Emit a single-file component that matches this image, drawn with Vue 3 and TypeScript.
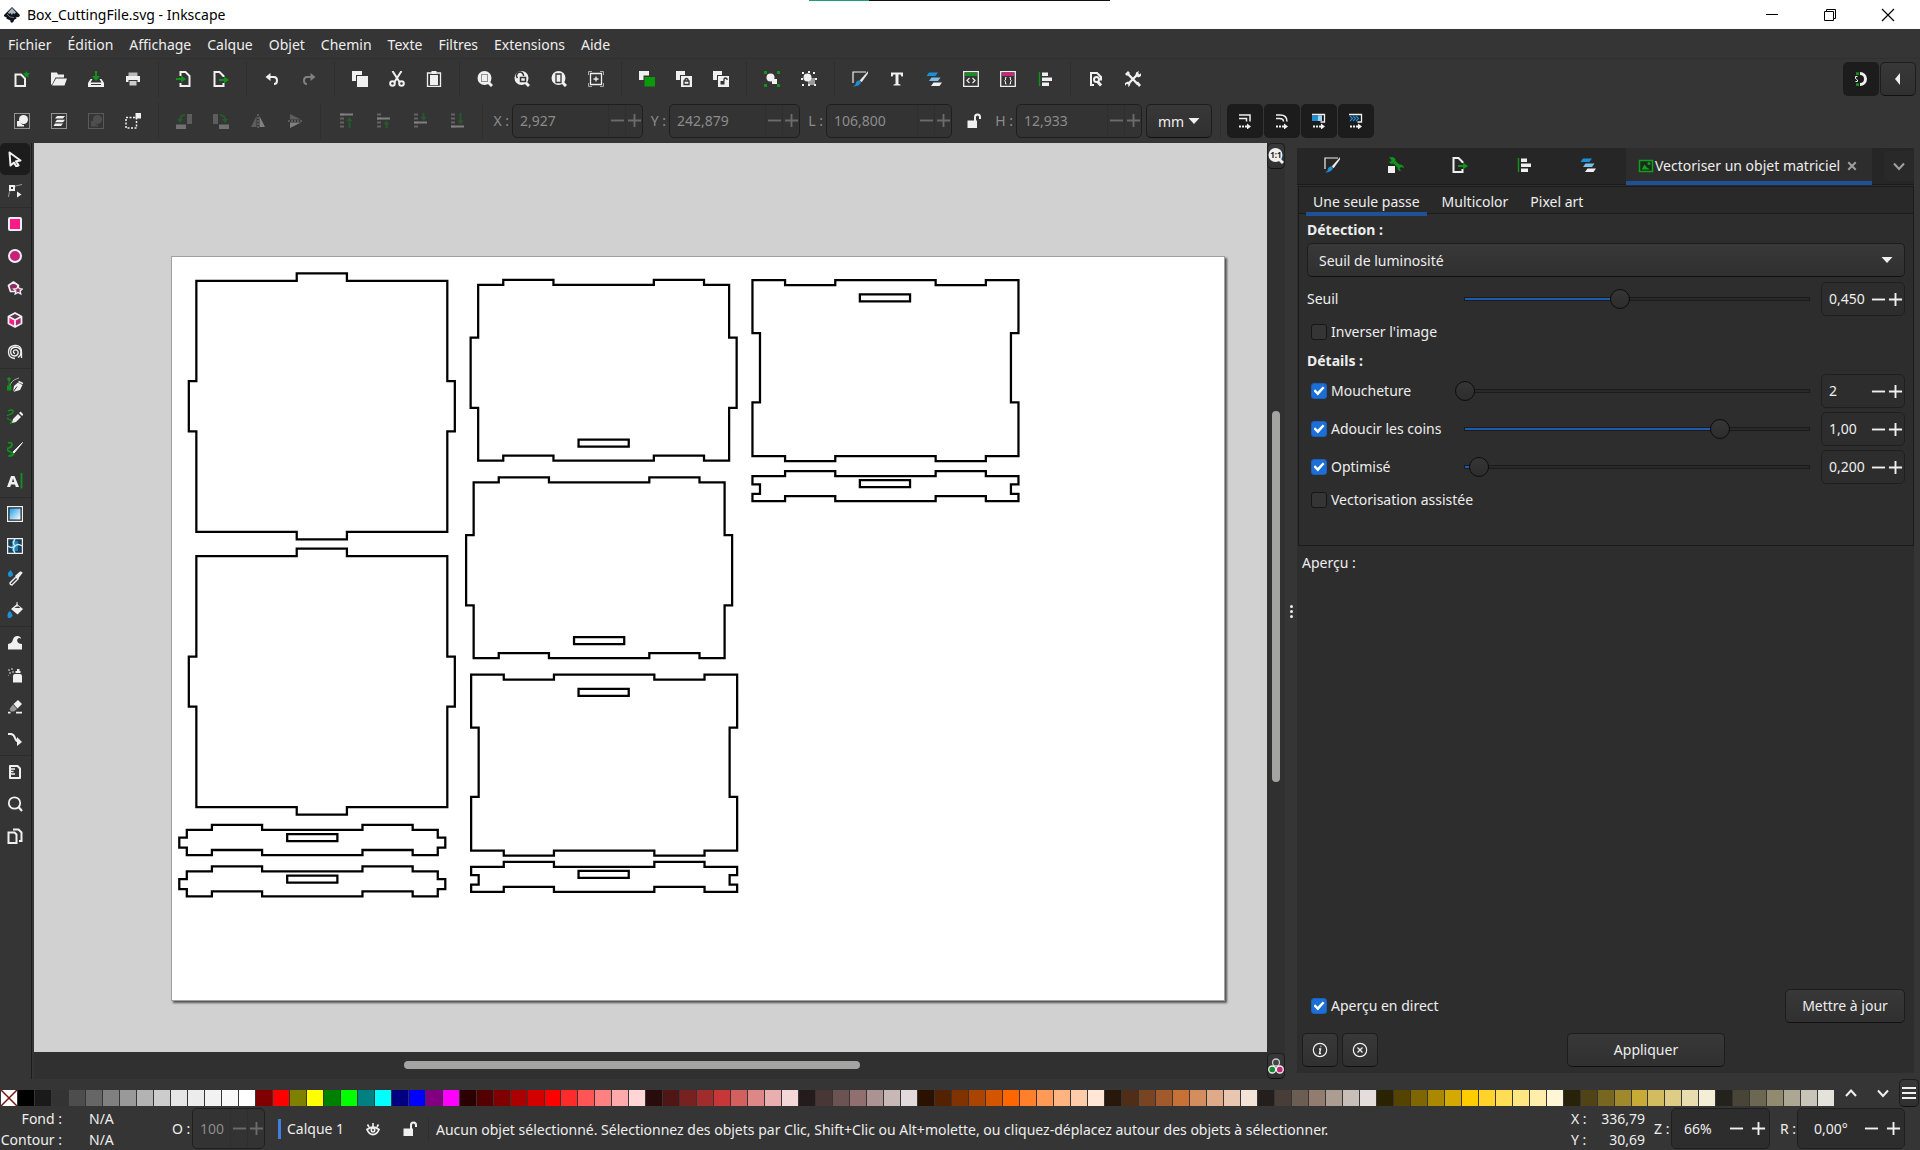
<script setup lang="ts">
import { reactive, ref } from 'vue'

type Group = { name: string; label: string; off?: boolean }[]

const W = '#f0f0f0'
const G = '#12921c'
const B = '#1c8fd6'
const P = '#ff1a8c'

const lens = `<circle cx="7.500" cy="7" r="7" fill="${W}"/><path d="M11.500 11.500l3.500 3.500" stroke="${W}" stroke-width="3"/>`
const stack = `<path d="M0 0h9v4H4v5H0z" fill="${W}"/>`
const dotsArrow = `<path d="M2 13.500h8" stroke="${W}" stroke-width="2" stroke-dasharray="2 1"/><path d="M10 10.500l4 3-4 3z" fill="${W}"/>`
const lines = `<path d="M2 1.500h4M2 5.500h4M2 9.500h4M2 13.500h4" stroke="#aaa" stroke-width="2"/>`
const frame = `<path d="M.5.5h15v15H.5z" fill="none" stroke="${W}" stroke-dasharray="1 1"/>`

const icons: Record<string, string> = {
  logo: `<path d="M8 0L15.500 7.500q1 1.500-1 2.500l-3 .5q2 1 0 1.500l-1.500 1q.5 1-2 3-2.500-1.500-1.500-2.500L2 11.500q2-.5-.5-1.500T.5 7.500z" fill="#10151c"/><path d="M8 1l4 4.500-1.500 1.500L9 6 8 8 6.500 6 5 7 4 5.500z" fill="#aab6c4"/><path d="M3 7l3 3 4 .5" stroke="#6a7684" fill="none"/>`,
  new: `<path d="M1.500 3.500h5.500l4 4V15H1.500z" fill="none" stroke="${W}" stroke-width="2"/><path d="M12.500 0l1 2 2.500.3-1.800 1.700.5 2.500-2.200-1.200-2.200 1.200.5-2.500L9 2.300l2.500-.3z" fill="${G}"/>`,
  open: `<path d="M0 1.500h6l1 2h6v3H4.500L1 13.500H0z" fill="${W}"/><path d="M5 7.500h11l-2.500 7H1z" fill="${W}"/>`,
  save: `<path d="M8 0v8" stroke="${G}" stroke-width="2"/><path d="M4 5h8L8 10z" fill="${G}"/><path d="M2.500 8h2l-2 3.500h11l-2-3.500h2l2.500 4v4H0v-4z" fill="${W}"/><path d="M3 13.500h10" stroke="#353535" stroke-width="1"/>`,
  print: `<path d="M3.500 1.500h9V5h-9z" fill="#bbb"/><path d="M1 5h14v6h-2.500V9h-9v2H1z" fill="${W}"/><path d="M4.500 10h7v4.500h-7z" fill="#ccc"/>`,
  import: `<path d="M4.500 5V1h5l4 4v10h-9v-3" fill="none" stroke="${W}" stroke-width="2"/><path d="M0 8h6" stroke="${G}" stroke-width="2"/><path d="M5 4.500l5 3.500-5 3.500z" fill="${G}"/>`,
  export: `<path d="M10.500 12v3h-9V1h5l4 4v1" fill="none" stroke="${W}" stroke-width="2"/><path d="M6 9h6" stroke="${G}" stroke-width="2"/><path d="M11 5.500L16 9l-5 3.500z" fill="${G}"/>`,
  undo: `<path d="M3 6h7q3 0 3 3.500T10 13" fill="none" stroke="${W}" stroke-width="2"/><path d="M6.500 2v8L1.500 6z" fill="${W}"/>`,
  redo: `<path d="M13 6H6Q3 6 3 9.500T6 13" fill="none" stroke="${W}" stroke-width="2"/><path d="M9.500 2v8l5-4z" fill="${W}"/>`,
  copy: `<path d="M0 0h10v4H4v6H0z" fill="${W}"/><path d="M5 5h11v11H5z" fill="${W}"/>`,
  cut: `<path d="M3.500 0l7 11M12.500 0l-7 11" stroke="${W}" stroke-width="2"/><circle cx="3.500" cy="12.500" r="2.300" fill="none" stroke="${W}" stroke-width="2"/><circle cx="12.500" cy="12.500" r="2.300" fill="none" stroke="${W}" stroke-width="2"/>`,
  paste: `<path d="M1.500 2h13v13.500h-13z" fill="none" stroke="${W}" stroke-width="1.300"/><path d="M4 4h8v10H4zM5.500 0h5v3h-5z" fill="${W}"/>`,
  zoomSel: `${lens}<path d="M4.500 3.500h6v7h-6z" fill="none" stroke="#333" stroke-dasharray="1 1"/>`,
  zoomDraw: `${lens}<path d="M3.500 7a3.500 3.500 0 1 1 6-2M6.500 6.500h5v4h-5z" fill="none" stroke="#333" stroke-width="1.500"/>`,
  zoomPage: `${lens}<path d="M5 3h5v8.500H5z" fill="none" stroke="#333" stroke-width="1.300"/>`,
  center: `<path d="M2.500 2.500h11v11h-11zM8 5.500v5M5.500 8h5" fill="none" stroke="${W}" stroke-width="1.300"/><path d="M.5 4V.5H4M12 .5h3.500V4M15.500 12v3.500H12M4 15.500H.5V12" fill="none" stroke="#aaa"/>`,
  duplicate: `<path d="M0 0h10v4.500H4.500V9H0z" fill="${W}"/><path d="M5.500 6H16v9.500H5.500z" fill="#0a9a0a"/>`,
  clone: `${stack}<path d="M5 5h11v11H5z" fill="${W}"/><path d="M8 10h5v3.500H8zM9 10V8.500q1.500-2 3 0V10" fill="none" stroke="#333" stroke-width="1.300"/>`,
  unlink: `${stack}<path d="M5 5h11v11H5z" fill="${W}"/><path d="M7.500 10h4v3.500h-4z" fill="#333"/><path d="M11 10V8q1.500-2 3 0v1" fill="none" stroke="#333" stroke-width="1.300"/>`,
  group: `<path d="M0 0h3v3H0zM13 0h3v3h-3zM0 13h3v3H0zM13 13h3v3h-3z" fill="${G}"/><path d="M8 8h5v5H8z" fill="${W}"/><circle cx="6.500" cy="6.500" r="4" fill="${W}"/>`,
  ungroup: `<path d="M7 7h7v7H7z" fill="#999"/><circle cx="6.500" cy="6.500" r="4" fill="${W}"/><path d="M1 1h2v2H1zM7 0h2v2H7zM12 1h2v2h-2zM0 7h2v2H0zM14 7h2v2h-2zM1 13h2v2H1zM7 13h2v2H7zM13 13h2v2h-2z" fill="${W}"/>`,
  fill: `<path d="M1 12V1h13" fill="none" stroke="${W}" stroke-width="1.200"/><path d="M16 .5L8 9.500l1.500 1.500L16 2z" fill="${W}" stroke="${W}" stroke-width=".5"/><path d="M7 9.500l2 2Q7 15.500 1 15.500q3-1.500 3-3.500t3-2.500z" fill="${B}"/>`,
  text: `<path d="M2 1.500h12v4h-1.500L11.500 3.500h-2v9.500l2 .5v1h-7v-1l2-.5V3.500h-2L3.500 5.500H2z" fill="${W}"/>`,
  layers: `<path d="M3 1.500h9L9.500 5H.5z" fill="${B}"/><path d="M5.500 6.500h9L12 10H3z" fill="#7fc0ea"/><path d="M7.500 11.500H16L13.500 15H5z" fill="${W}"/>`,
  xml: `<path d="M.7.7h14.600v14.600H.7z" fill="none" stroke="${W}" stroke-width="1.300"/><path d="M2 2h12v3H2z" fill="${G}"/><path d="M6.500 7L4 9.500 6.500 12M9.500 7L12 9.500 9.500 12" fill="none" stroke="${W}" stroke-width="1.200"/>`,
  css: `<path d="M.7.7h14.600v14.600H.7z" fill="none" stroke="${W}" stroke-width="1.300"/><path d="M2 2h12v3H2z" fill="#d4217c"/><path d="M6.500 6.500H5.500V9l-1 .8 1 .7v2.500h1M9.500 6.500h1V9l1 .8-1 .7v2.500h-1" fill="none" stroke="${W}"/>`,
  align: `<path d="M2.500 1v14" stroke="${G}" stroke-width="1.500"/><path d="M5 1.500h6v3.500H5zM5 6.500h10V10H5zM5 11.500h7V15H5z" fill="${W}"/>`,
  docprops: `<path d="M6 14H3V2h6l4 4v3.500" fill="none" stroke="${W}" stroke-width="2"/><circle cx="8.500" cy="8.500" r="2.500" fill="none" stroke="${W}" stroke-width="2"/><path d="M9.500 10.500l3.500 4" stroke="${W}" stroke-width="3"/>`,
  prefs: `<path d="M2 2l11 11.500M13.500 2.500L3 13" stroke="${W}" stroke-width="2.400"/><path d="M0 3l3-3 2 2-3 3zM11 1.500L14 0l-1 2.500 1.500 1L16 2v3l-2.500 1.500-3-2zM0 12l3-1.500 2.500 2L4.500 15 3 16l.5-2.500L1.500 13 0 15zM11 12l2-1.500 3 3.500-2 2z" fill="${W}"/>`,
  snap: `<path d="M7 2.500a5.500 5.500 0 0 1 0 11" fill="none" stroke="${W}" stroke-width="3"/><path d="M3 1.200h3V4H3zM3 12.200h3V15H3z" fill="${G}"/><path d="M4.500 5.500H2.500v2l2 1.500v1.500h-2" fill="none" stroke="${W}"/>`,
  selObj: `${frame}<circle cx="9.500" cy="6.500" r="4.500" fill="${W}"/><path d="M3 8h3q1 4 4 4v1.500H3z" fill="${W}"/>`,
  selLayers: `${frame}<path d="M6 3h8l-2 2.500H4zM6 6.800h8L12 9.300H4zM4 10.500h8L10 13H2.500z" fill="${W}"/>`,
  desel: `${frame}<circle cx="9.500" cy="6.500" r="4.500" fill="#777"/><path d="M3 8h3q1 4 4 4v1.500H3z" fill="#777"/>`,
  selTouch: `<path d="M1 4.500h10.500V15H1z" fill="none" stroke="${W}" stroke-width="1.500" stroke-dasharray="2 1.500"/><path d="M10.500 0H16v5.500h-5.500z" fill="${W}"/>`,
  rotL: `<path d="M11 1h5v10h-5z" fill="#999"/><path d="M0 11.500h10V16H0z" fill="#ccc"/><path d="M9 2Q4 2 4 7" fill="none" stroke="${G}" stroke-width="2"/><path d="M1 6h6l-3 4z" fill="${G}"/>`,
  rotR: `<path d="M0 1h5v10H0z" fill="#999"/><path d="M6 11.500h10V16H6z" fill="#ccc"/><path d="M7 2q5 0 5 5" fill="none" stroke="${G}" stroke-width="2"/><path d="M9 6h6l-3 4z" fill="${G}"/>`,
  flipH: `<path d="M6.500 3v11H1z" fill="#999"/><path d="M9.500 3v11H15z" fill="${W}"/><path d="M8 1v14" stroke="${W}" stroke-dasharray="2 1"/>`,
  flipV: `<path d="M3 6.500h11L3 1z" fill="#999"/><path d="M3 9.500h11L3 15z" fill="${W}"/><path d="M1 8h14" stroke="${W}" stroke-dasharray="2 1"/>`,
  top: `${lines}<path d="M2 1.500h13" stroke="${W}" stroke-width="2"/><path d="M11.500 15V6" stroke="${G}" stroke-width="2"/><path d="M8.500 8l3-4 3 4z" fill="${G}"/>`,
  raise: `${lines}<path d="M2 5.500h13" stroke="${W}" stroke-width="2"/><path d="M11.500 15v-5" stroke="${G}" stroke-width="2"/><path d="M8.500 11.500l3-4 3 4z" fill="${G}"/>`,
  lower: `${lines}<path d="M2 9.500h13" stroke="${W}" stroke-width="2"/><path d="M11.500 0v5" stroke="${G}" stroke-width="2"/><path d="M8.500 4l3 4 3-4z" fill="${G}"/>`,
  bottom: `${lines}<path d="M2 13.500h13" stroke="${W}" stroke-width="2"/><path d="M11.500 0v9" stroke="${G}" stroke-width="2"/><path d="M8.500 7.500l3 4 3-4z" fill="${G}"/>`,
  lock: `<path d="M1.500 7.500h9.500V15H1.500z" fill="${W}"/><path d="M9 8V4q0-2.500 2.500-2.500T14 4v2" fill="none" stroke="${W}" stroke-width="2"/>`,
  scaleStroke: `<path d="M2 2h11v6.500M2 5.500h7.500v3" fill="none" stroke="${W}" stroke-width="1.500"/>` + dotsArrow,
  scaleCorner: `<path d="M2 2h4q7 0 7 6.500M2 5.500h3.500q4 0 4 3" fill="none" stroke="${W}" stroke-width="1.500"/>` + dotsArrow,
  scaleGrad: `<path d="M1 2.500h10V8H1z" fill="${B}"/><path d="M7 2.500h4V8H7z" fill="#9cd3f5"/><path d="M1 1.500h12.500v7.500h-4" fill="none" stroke="${W}" stroke-width="1.300"/>` + dotsArrow,
  scalePat: `<path d="M1 1.500h12.500v7.500h-4" fill="none" stroke="${W}" stroke-width="1.300"/><path d="M2 3l2.500 2.500L2 8M5 3l2.500 2.500L5 8M8 3l2.500 2.500L8 8" fill="none" stroke="${B}" stroke-width="1.200"/>` + dotsArrow,
  select: `<path d="M2.500 1.500l11 8-4.500.8 2.500 4-2.200 1.200L7 11.500l-3.500 3z" fill="none" stroke="${W}" stroke-width="2" stroke-linejoin="round"/>`,
  node: `<path d="M1.500 14Q1.500 3 15 1.500" fill="none" stroke="#999"/><path d="M3 3h4v4H3z" fill="#353535" stroke="${W}" stroke-width="2"/><path d="M10 8.500l4.500 3-4.500 3z" fill="${W}"/>`,
  rect: `<rect x="2" y="2" width="12" height="12" rx="1" fill="${P}" stroke="${W}" stroke-width="2"/>`,
  ellipse: `<circle cx="8" cy="8" r="6" fill="#c9207a" stroke="${W}" stroke-width="2"/>`,
  star: `<path d="M6.500 2l5 3.500-1.500 6H3.500L1.500 5.500z" fill="#8e2d62" stroke="${W}" stroke-width="1.700" stroke-linejoin="round"/><path d="M11 6l1.300 2.700 3 .3-2.200 2 .7 3L11 12.500 8.200 14l.7-3L6.700 9l3-.3z" fill="#8e2d62" stroke="${W}" stroke-width="1.300"/>`,
  cube: `<path d="M8 1l6.500 3.500v7L8 15l-6.500-3.500v-7z" fill="${P}"/><path d="M8 1l6.500 3.500L8 8 1.500 4.500z" fill="#55384a"/><path d="M8 8l6.500-3.500v7L8 15z" fill="#b3266f"/><path d="M8 1l6.500 3.500v7L8 15l-6.500-3.500v-7zM1.500 4.500L8 8l6.500-3.500M8 8v7" fill="none" stroke="${W}" stroke-width="1.800" stroke-linejoin="round"/>`,
  spiral: `<path d="M8 9.500Q6 9 6.500 7.300T9.500 6q2.300 1 1.500 3.500T7.500 12Q3.500 11.500 3.700 7.500T8.500 3q5 .3 5.500 5-.1 4-3 5.500" fill="none" stroke="${W}" stroke-width="1.300"/><path d="M8 14.500Q1.500 14 1.500 8T8 1.500t6.500 6.500v6" fill="none" stroke="${W}" stroke-width="1.300"/>`,
  pen: `<path d="M2 12Q3 3 12 1" fill="none" stroke="#aaa"/><circle cx="2" cy="2" r="1.800" fill="${G}"/><path d="M2 3v9M0 9h4v4H0z" fill="${G}" stroke="${G}"/><path d="M6 15l1-6 4-3.500 4.500 2.500-2.500 5z" fill="${W}"/><path d="M6 15l4-5.500" stroke="#353535"/><path d="M11.500 4.500l4.500 2" stroke="${W}" stroke-width="1.500"/>`,
  pencil: `<path d="M1 2q4-2 5 0T1.500 6t0 4 1.500 5" fill="none" stroke="${G}" stroke-width="1.300"/><path d="M5 14l1-4 5-5 3 3-5 5z" fill="${W}"/><path d="M12 4l1.500-1.500 3 3L15 7z" fill="${W}"/>`,
  brush: `<path d="M1 2q4-1 4 1.500T1.500 7t2 4-2 4q6 0 5-4" fill="none" stroke="${G}" stroke-width="1.800"/><path d="M15.500 1.500L10 8.500 7 12l-1-1z" fill="${W}" stroke="${W}"/>`,
  type: `<path d="M0 14L4 3h3.500L12 14H8.800l-.8-2.500H4L3.200 14zM5 9h2.300L6 5.500z" fill="${W}" fill-rule="evenodd"/><path d="M14.500 0v15.500" stroke="${G}" stroke-width="1.800"/>`,
  gradient: `<path d="M.6.600h14.800v14.800H.6z" fill="#20292f" stroke="${W}" stroke-width="1.200"/><path d="M2.500 2.500h11v11h-11z" fill="url(#blueWhite)"/>`,
  mesh: `<path d="M.6.600h14.800v14.800H.6z" fill="#1b3f56" stroke="${W}" stroke-width="1.200"/><path d="M5 3h6v10H5z" fill="#2380b5"/><path d="M8 8Q5 5 8 1M8 8q-3 3 0 7M8 8Q5 11 1 8M8 8q3-3 7 0" fill="none" stroke="#bfe8ff" stroke-width="1.500"/>`,
  dropper: `<path d="M3.500 0q3 3.500 2.500 5T3.500 7 1 5t2.500-5z" fill="${B}"/><path d="M3.500 14.500l-.5-1.500 6-6 2 2-6 6z" fill="none" stroke="${W}" stroke-width="1.400"/><path d="M9 5l4-3.500q2.500-.5 2.500 1.500L12 7.500l-.5 1.500L8 6z" fill="${W}"/>`,
  bucket: `<path d="M3 9q2.500 3 2.500 4.500T3 16 .5 13.500 3 9z" fill="${B}"/><path d="M4 7l6-5 6 5-5.500 5.500z" fill="${W}"/><path d="M7.500 6l3-2.500L13.500 6z" fill="#353535"/><path d="M10 0v5" stroke="${W}"/>`,
  tweak: `<path d="M1 14.500V9q4-.5 5-4.500t5-3.500q3 .5 3 3-1.500-1.500-3-.5T10.500 7q1 2 4.500 2v5.500z" fill="${W}"/>`,
  spray: `<path d="M6 9q0-2 2-2h5q2 0 2 2v6.500H6zM8.500 4h5v2h-5zM10 2h2.500v2H10z" fill="${W}"/><path d="M1 2h2v2H1zM4 1h2v2H4zM2 5h2v2H2zM5 4h2v2H5zM1 8h1v1H1z" fill="#888"/>`,
  eraser: `<path d="M6.500 5L11 1l4 4-4.500 4.500z" fill="${W}"/><path d="M6 5.500L10 10l-3 2.500H4L2.500 10z" fill="#999"/><path d="M1 13.700h2.500M9 13.700h6" stroke="${W}" stroke-width="1.800"/>`,
  connector: `<path d="M1 3h3q3 .5 4 4t4 3.500" fill="none" stroke="${W}" stroke-width="2"/><path d="M10 6l5 5-5 4z" fill="${W}"/>`,
  measure: `<path d="M3 2h7.500l2.500 2.500V14H3z" fill="none" stroke="${W}" stroke-width="2" stroke-linejoin="round"/><path d="M4 5h4M4 7.500h2.500M4 10h4" stroke="${W}" stroke-width="1.300"/>`,
  zoom: `<circle cx="7.500" cy="7" r="5.700" fill="none" stroke="${W}" stroke-width="1.800"/><path d="M11.500 11l3.500 4" stroke="${W}" stroke-width="2.200"/>`,
  pages: `<path d="M1.500 4.500h6l2 2V15h-8z" fill="none" stroke="${W}" stroke-width="2"/><path d="M6 1.500h5.500l3 3V13H12" fill="none" stroke="${W}" stroke-width="2"/>`,
  objprops: `<path d="M0 9h7v7H0z" fill="${W}"/><path d="M4 0L1 .5l2.500 2.500-.5 1.500L1 4.500Q2 8 5.500 6.500l4 4Q9.500 14.500 13 14l-1.500-2.500 1.500-1.500 3 1q-1-4-4.500-3.500L7.500 4Q8 .5 4 0z" fill="${G}"/>`,
  trace: `<path d="M1.500 2.500h13v11h-13z" fill="#1a2a1c" stroke="#12a01c" stroke-width="1.500"/><path d="M3.500 11.500l3-5 2.500 3 3 2z" fill="#12a01c"/><circle cx="11" cy="5.500" r="1.500" fill="#12a01c"/>`,
  cms: `<circle cx="8" cy="4.500" r="3.500" fill="#444" stroke="#ccc" stroke-width="1.300"/><circle cx="4.200" cy="11.500" r="3.500" fill="#128a30" stroke="${W}" stroke-width="1.300"/><circle cx="11.800" cy="11.500" r="3.500" fill="#c2267d" stroke="${W}" stroke-width="1.300"/>`,
  eye: `<path d="M2 8.500Q8 4 14 8.500 12 13.500 8 13.500T2 8.500z" fill="none" stroke="${W}" stroke-width="1.800"/><circle cx="8" cy="9" r="1.800" fill="none" stroke="${W}" stroke-width="1.500"/><path d="M8 6V2M4 6L2.500 3.500M12 6l1.500-2.500" stroke="${W}" stroke-width="1.600"/>`,
  info: `<circle cx="8" cy="8" r="6.700" fill="none" stroke="${W}" stroke-width="1.200"/><path d="M7 7h1.500L7.500 11.500H9M8.500 4.500h.8" fill="none" stroke="${W}" stroke-width="1.400"/>`,
  cancel: `<circle cx="8" cy="8" r="6.700" fill="none" stroke="${W}" stroke-width="1.200"/><path d="M5.500 5.500l5 5M10.500 5.500l-5 5" stroke="${W}" stroke-width="1.300"/>`,
  left: `<path d="M10 2v12L5 8z" fill="${W}"/>`,
  down: `<path d="M2.500 5h11L8 11z" fill="${W}"/>`,
  chevDown: `<path d="M3 5.500L8 11l5-5.500" fill="none" stroke="${W}" stroke-width="2"/>`,
  chevUp: `<path d="M3 11l5-5.500 5 5.500" fill="none" stroke="${W}" stroke-width="2"/>`,
  menu: `<path d="M1 3h14M1 8h14M1 13h14" stroke="${W}" stroke-width="2"/>`,
  minus: `<path d="M1 8h14" stroke="${W}" stroke-width="2"/>`,
  plus: `<path d="M1 8h14M8 1v14" stroke="${W}" stroke-width="2"/>`,
  close: `<path d="M3 3l10 10M13 3L3 13" stroke="#a0a0a0" stroke-width="2.500"/>`,
  winMin: `<path d="M2 7.500h12" stroke="#000"/>`,
  winMax: `<path d="M2.500 4.500h9v9h-9zM4.500 4.500v-2h9v9h-2" fill="none" stroke="#000"/>`,
  winClose: `<path d="M2 2l12 12M14 2L2 14" stroke="#000" stroke-width="1.200"/>`,
}

const menus = ['Fichier', 'Édition', 'Affichage', 'Calque', 'Objet', 'Chemin', 'Texte', 'Filtres', 'Extensions', 'Aide']

const commands: Group[] = [
  [{ name: 'new', label: 'Nouveau' }, { name: 'open', label: 'Ouvrir' }, { name: 'save', label: 'Enregistrer' }, { name: 'print', label: 'Imprimer' }],
  [{ name: 'import', label: 'Importer' }, { name: 'export', label: 'Exporter' }],
  [{ name: 'undo', label: 'Annuler' }, { name: 'redo', label: 'Rétablir', off: true }],
  [{ name: 'copy', label: 'Copier' }, { name: 'cut', label: 'Couper' }, { name: 'paste', label: 'Coller' }],
  [{ name: 'zoomSel', label: 'Zoom sélection' }, { name: 'zoomDraw', label: 'Zoom dessin' }, { name: 'zoomPage', label: 'Zoom page' }, { name: 'center', label: 'Centrer la page' }],
  [{ name: 'duplicate', label: 'Dupliquer' }, { name: 'clone', label: 'Cloner' }, { name: 'unlink', label: 'Délier le clone' }],
  [{ name: 'group', label: 'Grouper' }, { name: 'ungroup', label: 'Dégrouper' }],
  [{ name: 'fill', label: 'Fond et contour' }, { name: 'text', label: 'Texte et police' }, { name: 'layers', label: 'Calques et objets' }, { name: 'xml', label: 'Éditeur XML' }, { name: 'css', label: 'Sélecteurs' }, { name: 'align', label: 'Aligner et distribuer' }],
  [{ name: 'docprops', label: 'Propriétés du document' }, { name: 'prefs', label: 'Préférences' }],
]

const selectorTools: Group[] = [
  [{ name: 'selObj', label: 'Tout sélectionner' }, { name: 'selLayers', label: 'Tout sélectionner dans les calques' }, { name: 'desel', label: 'Désélectionner', off: true }, { name: 'selTouch', label: 'Boîte de sélection' }],
  [{ name: 'rotL', label: 'Rotation à gauche', off: true }, { name: 'rotR', label: 'Rotation à droite', off: true }, { name: 'flipH', label: 'Miroir horizontal', off: true }, { name: 'flipV', label: 'Miroir vertical', off: true }],
  [{ name: 'top', label: 'Au premier plan', off: true }, { name: 'raise', label: 'Monter', off: true }, { name: 'lower', label: 'Descendre', off: true }, { name: 'bottom', label: "À l'arrière-plan", off: true }],
]

const scaleToggles: Group = [
  { name: 'scaleStroke', label: 'Adapter les contours' },
  { name: 'scaleCorner', label: 'Adapter les coins' },
  { name: 'scaleGrad', label: 'Adapter les dégradés' },
  { name: 'scalePat', label: 'Adapter les motifs' },
]

const tools: Group[] = [
  [{ name: 'select', label: 'Sélection' }, { name: 'node', label: 'Nœuds' }],
  [{ name: 'rect', label: 'Rectangle' }, { name: 'ellipse', label: 'Ellipse' }, { name: 'star', label: 'Étoile' }, { name: 'cube', label: 'Boîte 3D' }, { name: 'spiral', label: 'Spirale' }],
  [{ name: 'pen', label: 'Stylo' }, { name: 'pencil', label: 'Crayon' }, { name: 'brush', label: 'Calligraphie' }, { name: 'type', label: 'Texte' }],
  [{ name: 'gradient', label: 'Dégradé' }, { name: 'mesh', label: 'Filet' }, { name: 'dropper', label: 'Pipette' }, { name: 'bucket', label: 'Remplissage' }],
  [{ name: 'tweak', label: 'Ajuster' }, { name: 'spray', label: 'Aérographe' }, { name: 'eraser', label: 'Gomme' }, { name: 'connector', label: 'Connecteur' }],
  [{ name: 'measure', label: 'Mesure' }, { name: 'zoom', label: 'Zoom' }, { name: 'pages', label: 'Pages' }],
]

const dockTabs: Group = [
  { name: 'fill', label: 'Fond et contour' },
  { name: 'objprops', label: "Propriétés de l'objet" },
  { name: 'export', label: 'Exporter' },
  { name: 'align', label: 'Aligner' },
  { name: 'layers', label: 'Calques' },
]

// Cutting outlines, in millimetres on the A3 sheet
const lid = 'h40v-3h20v3h40v40h3v20h-3v40h-40v3h-20v-3h-40v-40h-3v-20h3z'
const tabbed = 'h10v-2h20v2h40v-2h20v2h10v21h3v28h-3v21h-10v-2h-20v2h-40v-2h-20v2h-10v-21h-3v-28h3z'
const notched = 'h13v2h20v-2h40v2h20v-2h13v21.100h-3v27.600h3v21.400h-13v2h-20v-2h-40v2h-20v-2h-13v-21.400h3v-27.600h-3z'
const stripIn = 'h13v-2h20v2h40v-2h20v2h13v3.300h-3v3.800h3v2.900h-13v-2h-20v2h-40v-2h-20v2h-13v-2.900h3v-3.800h-3z'
const stripOut = 'h10v-2h20v2h40v-2h20v2h10v3.100h3v4h-3v2.900h-10v-2h-20v2h-40v-2h-20v2h-10v-2.900h-3v-4h3z'
const slot = 'h20v2.800h-20z'

const pieces = [
  `M10.100 9.900${lid}`,
  `M10.100 119.600${lid}`,
  `M122.400 11.500${tabbed}M162.400 73.200${slot}`,
  `M120.600 90.200${tabbed}M160.600 151.900${slot}`,
  `M119.600 166.800${notched}M162.400 172.500${slot}`,
  `M231.700 9.600${notched}M274.500 15.300${slot}`,
  `M231.700 87.700${stripIn}M274.500 89.300${slot}`,
  `M119.600 243.400${stripIn}M162.400 245${slot}`,
  `M6.300 228.700${stripOut}M46.300 230.400${slot}`,
  `M6.300 245.200${stripOut}M46.300 246.900${slot}`,
]

const palette = (
  '000 1a1a1a 333 4d4d4d 666 808080 999 b3b3b3 ccc e6e6e6 ececec f2f2f2 f9f9f9 fff ' +
  '800000 f00 808000 ff0 008000 0f0 008080 0ff 000080 00f 800080 f0f ' +
  '2b0000 550000 800000 a00 d40000 f00 ff2a2a f55 ff8080 faa ffd5d5 ' +
  '280b0b 501616 782121 a02c2c c83737 d35f5f de8787 e9afaf f4d7d7 ' +
  '241c1c 483737 6c5353 916f6f ac9393 c8b7b7 e3dbdb ' +
  '2b1100 520 803300 a40 d45500 f60 ff7f2a f95 ffb380 fca ffe6d5 ' +
  '28170b 502d16 784421 a05a2c c87137 d38d5f deaa87 e9c6af f4e3d7 ' +
  '241f1c 483e37 6c5d53 917c6f ac9d93 c8beb7 e3dedb ' +
  '2b2200 540 806600 a80 d4aa00 fc0 ffd42a fd5 ffe680 fea fff6d5 ' +
  '28220b 504416 786721 a0892c c8ab37 d3bc5f decd87 e9ddaf f4eed7 ' +
  '24221c 484537 6c6753 918a6f aca793 c8c4b7 e3e2db'
).split(' ')

const geometry = reactive([
  { id: 'geo-x', label: 'X :', value: '2,927', wide: true },
  { id: 'geo-y', label: 'Y :', value: '242,879', wide: true },
  { id: 'geo-w', label: 'L :', value: '106,800', wide: false },
  { id: 'geo-h', label: 'H :', value: '12,933', wide: false },
])

const threshold = reactive({ pos: 45, value: '0,450' })
const invert = ref(false)
const assisted = ref(false)
const live = ref(true)
const details = reactive([
  { id: 'speckles', label: 'Moucheture', on: true, pos: 0, value: '2' },
  { id: 'smooth', label: 'Adoucir les coins', on: true, pos: 74, value: '1,00' },
  { id: 'optimize', label: 'Optimisé', on: true, pos: 4, value: '0,200' },
])
</script>

<template>
  <div class="app">
    <header class="titlebar">
      <svg class="ic" viewBox="0 0 16 16" v-html="icons.logo"></svg>
      <h1>Box_CuttingFile.svg - Inkscape</h1>
      <span class="share"><i></i></span>
      <div class="win">
        <button v-for="b in ['winMin', 'winMax', 'winClose']" :key="b" :aria-label="b"><svg class="ic" viewBox="0 0 16 16" v-html="icons[b]"></svg></button>
      </div>
    </header>

    <nav class="menubar">
      <button v-for="m in menus" :key="m">{{ m }}</button>
    </nav>

    <div class="toolbar commands">
      <div v-for="(g, i) in commands" :key="i" class="group">
        <button v-for="c in g" :key="c.name" :aria-label="c.label" :disabled="c.off"><svg class="ic" viewBox="0 0 16 16" v-html="icons[c.name]"></svg></button>
      </div>
      <div class="snap">
        <button class="on" aria-label="Magnétisme"><svg class="ic" viewBox="0 0 16 16" v-html="icons.snap"></svg></button>
        <button class="raised" aria-label="Options de magnétisme"><svg class="ic" viewBox="0 0 16 16" v-html="icons.left"></svg></button>
      </div>
    </div>

    <div class="toolbar options">
      <div v-for="(g, i) in selectorTools" :key="i" class="group">
        <button v-for="c in g" :key="c.name" :aria-label="c.label" :disabled="c.off"><svg class="ic" viewBox="0 0 16 16" v-html="icons[c.name]"></svg></button>
      </div>
      <div class="geometry">
        <template v-for="(f, i) in geometry" :key="f.id">
          <button v-if="i === 3" class="ratio" aria-label="Verrouiller les proportions"><svg class="ic" viewBox="0 0 16 16" v-html="icons.lock"></svg></button>
          <label class="dim" :for="f.id">{{ f.label }}</label>
          <div class="spin off" :class="{ wide: f.wide }">
            <input :id="f.id" v-model="f.value" disabled />
            <button aria-label="Diminuer" disabled><svg viewBox="0 0 16 16" v-html="icons.minus"></svg></button>
            <button aria-label="Augmenter" disabled><svg viewBox="0 0 16 16" v-html="icons.plus"></svg></button>
          </div>
        </template>
        <div class="combo unit">
          <select aria-label="Unité"><option>mm</option></select>
          <svg viewBox="0 0 16 16" v-html="icons.down"></svg>
        </div>
      </div>
      <div class="toggles">
        <button v-for="t in scaleToggles" :key="t.name" class="on" :aria-label="t.label"><svg class="ic" viewBox="0 0 16 16" v-html="icons[t.name]"></svg></button>
      </div>
    </div>

    <main>
      <nav class="toolbox">
        <svg class="defs" aria-hidden="true"><defs><linearGradient id="blueWhite" x1="0" y1="0" x2="1" y2="1"><stop offset="0" stop-color="#1c9be6" /><stop offset="1" stop-color="#fff" /></linearGradient></defs></svg>
        <div v-for="(g, i) in tools" :key="i" class="toolgroup">
          <button v-for="t in g" :key="t.name" :class="{ on: t.name === 'select' }" :aria-label="t.label"><svg class="ic" viewBox="0 0 16 16" v-html="icons[t.name]"></svg></button>
        </div>
      </nav>

      <section class="desk">
        <div class="canvas">
          <svg class="sheet" viewBox="0 0 420 297"><path v-for="(d, i) in pieces" :key="i" :d="d" /></svg>
        </div>
        <div class="hscroll"><i></i></div>
      </section>

      <div class="vside">
        <button class="raised mini" aria-label="Zoom 1:1"><svg class="ic" viewBox="0 0 16 16" v-html="lens"></svg><b>1:1</b></button>
        <div class="vscroll"><i></i></div>
        <button class="raised mini" aria-label="Gestion des couleurs"><svg class="ic" viewBox="0 0 16 16" v-html="icons.cms"></svg></button>
      </div>
      <div class="grip"><i></i><i></i><i></i></div>

      <aside class="dock">
        <div class="docktabs">
          <button v-for="t in dockTabs" :key="t.name" class="tab" :aria-label="t.label"><svg class="ic" viewBox="0 0 16 16" v-html="icons[t.name]"></svg></button>
          <div class="tab current">
            <svg class="ic" viewBox="0 0 16 16" v-html="icons.trace"></svg>
            <span>Vectoriser un objet matriciel</span>
            <button aria-label="Fermer"><svg viewBox="0 0 16 16" v-html="icons.close"></svg></button>
          </div>
          <button class="more" aria-label="Autres onglets"><svg class="ic" viewBox="0 0 16 16" v-html="icons.chevDown"></svg></button>
        </div>

        <div class="book">
          <div class="modes">
            <button class="current">Une seule passe</button>
            <button>Multicolor</button>
            <button>Pixel art</button>
          </div>
          <div class="form">
            <label class="head" for="detection">Détection :</label>
            <div class="combo">
              <select id="detection"><option>Seuil de luminosité</option></select>
              <svg viewBox="0 0 16 16" v-html="icons.down"></svg>
            </div>
            <div class="row">
              <label class="name" for="threshold">Seuil</label>
              <input id="threshold" v-model="threshold.pos" type="range" :style="{ '--fill': threshold.pos / 100 }" />
              <div class="spin">
                <input v-model="threshold.value" aria-label="Seuil" />
                <button aria-label="Diminuer"><svg viewBox="0 0 16 16" v-html="icons.minus"></svg></button>
                <button aria-label="Augmenter"><svg viewBox="0 0 16 16" v-html="icons.plus"></svg></button>
              </div>
            </div>
            <label class="check line"><input v-model="invert" type="checkbox" />Inverser l'image</label>
            <h2 class="head">Détails :</h2>
            <div class="rows">
              <div v-for="d in details" :key="d.id" class="row">
                <label class="check name"><input v-model="d.on" type="checkbox" />{{ d.label }}</label>
                <input v-model="d.pos" type="range" :aria-label="d.label" :style="{ '--fill': d.pos / 100 }" />
                <div class="spin">
                  <input v-model="d.value" :aria-label="d.label" />
                  <button aria-label="Diminuer"><svg viewBox="0 0 16 16" v-html="icons.minus"></svg></button>
                  <button aria-label="Augmenter"><svg viewBox="0 0 16 16" v-html="icons.plus"></svg></button>
                </div>
              </div>
            </div>
            <label class="check line"><input v-model="assisted" type="checkbox" />Vectorisation assistée</label>
          </div>
        </div>

        <p class="preview">Aperçu :</p>
        <div class="live">
          <label class="check"><input v-model="live" type="checkbox" />Aperçu en direct</label>
          <button class="raised">Mettre à jour</button>
        </div>
        <div class="apply">
          <button class="raised square" aria-label="Aide"><svg class="ic" viewBox="0 0 16 16" v-html="icons.info"></svg></button>
          <button class="raised square" aria-label="Arrêter"><svg class="ic" viewBox="0 0 16 16" v-html="icons.cancel"></svg></button>
          <div><button class="raised">Appliquer</button></div>
        </div>
      </aside>
    </main>

    <div class="palette">
      <div class="swatches">
        <button class="none" aria-label="Aucune couleur"><svg viewBox="0 0 16 16"><path d="M0 0l16 16M16 0L0 16" stroke="#7a1515" stroke-width="1.500" /></svg></button>
        <button v-for="(c, i) in palette" :key="i" :aria-label="c" :style="{ background: '#' + c }"></button>
      </div>
      <button class="arrow" aria-label="Précédent"><svg class="ic" viewBox="0 0 16 16" v-html="icons.chevUp"></svg></button>
      <button class="arrow" aria-label="Suivant"><svg class="ic" viewBox="0 0 16 16" v-html="icons.chevDown"></svg></button>
      <button class="raised burger" aria-label="Configurer la palette"><svg viewBox="0 0 16 16" v-html="icons.menu"></svg></button>
    </div>

    <footer class="status">
      <dl class="style">
        <dt>Fond :</dt><dd>N/A</dd>
        <dt>Contour :</dt><dd>N/A</dd>
      </dl>
      <label class="opl" for="opacity">O :</label>
      <div class="spin off opacity">
        <input id="opacity" value="100" disabled />
        <button aria-label="Diminuer" disabled><svg viewBox="0 0 16 16" v-html="icons.minus"></svg></button>
        <button aria-label="Augmenter" disabled><svg viewBox="0 0 16 16" v-html="icons.plus"></svg></button>
      </div>
      <span class="layer">Calque 1</span>
      <button class="flag" aria-label="Visibilité"><svg class="ic" viewBox="0 0 16 16" v-html="icons.eye"></svg></button>
      <button class="flag" aria-label="Verrou"><svg class="ic" viewBox="0 0 16 16" v-html="icons.lock"></svg></button>
      <p class="message">Aucun objet sélectionné. Sélectionnez des objets par Clic, Shift+Clic ou Alt+molette, ou cliquez-déplacez autour des objets à sélectionner.</p>
      <dl class="coords">
        <dt>X :</dt><dd>336,79</dd>
        <dt>Y :</dt><dd>30,69</dd>
      </dl>
      <label for="zoom">Z :</label>
      <div class="spin big">
        <input id="zoom" value="66%" />
        <button aria-label="Zoom arrière"><svg viewBox="0 0 16 16" v-html="icons.minus"></svg></button>
        <button aria-label="Zoom avant"><svg viewBox="0 0 16 16" v-html="icons.plus"></svg></button>
      </div>
      <label for="rotation" class="rot">R :</label>
      <div class="spin big turn">
        <input id="rotation" value="0,00°" />
        <button aria-label="Tourner à gauche"><svg viewBox="0 0 16 16" v-html="icons.minus"></svg></button>
        <button aria-label="Tourner à droite"><svg viewBox="0 0 16 16" v-html="icons.plus"></svg></button>
      </div>
    </footer>
  </div>
</template>

<style>
body {
  margin: 0;
  background: #353535;
}
</style>

<style scoped>
.app {
  min-height: 100vh;
  display: flex;
  flex-direction: column;
  background: #353535;
  color: #eee;
  font: 14px/20px "Noto Sans", "Open Sans", sans-serif;
}
.app * {
  box-sizing: border-box;
}
button,
input,
select {
  font: inherit;
  color: inherit;
  background: none;
  border: 0;
  margin: 0;
  padding: 0;
  outline: 0;
  min-width: 0;
}
button {
  display: flex;
  align-items: center;
  justify-content: center;
}
h1, h2, p, dl, dd {
  margin: 0;
  font: inherit;
}
.ic {
  width: 16px;
  height: 16px;
  flex: none;
}
.raised {
  background: linear-gradient(#383838, #303030);
  border: 1px solid #1d1d1d;
  border-bottom-color: #101010;
  border-radius: 5px;
}
.on {
  background: #1c1c1c;
  border-radius: 5px;
}

.titlebar {
  position: relative;
  height: 29px;
  background: #fff;
  color: #000;
  display: flex;
  align-items: center;
  padding-left: 4px;
  gap: 7px;
}
.share {
  position: absolute;
  top: 0;
  left: 809px;
  width: 301px;
  height: 1px;
  background: #111;
}
.share i {
  display: block;
  width: 60px;
  height: 1px;
  background: #1a9e7c;
}
.win {
  margin-left: auto;
  display: flex;
  padding-right: 3px;
}
.win button {
  width: 58px;
  height: 29px;
}

.menubar {
  height: 30px;
  display: flex;
  padding: 2px 0 0 8px;
  gap: 16px;
  border-bottom: 1px solid #303030;
}

.toolbar {
  display: flex;
  align-items: center;
  height: 41px;
  padding: 0 4px 2px 3px;
}
.options {
  height: 43px;
}
.group {
  display: flex;
  align-items: center;
}
.group::after {
  content: "";
  width: 1px;
  height: 36px;
  margin: 0 6px 0 7px;
  background: #2e2e2e;
}
.commands .group:nth-last-child(2)::after {
  display: none;
}
.group button {
  width: 37px;
  height: 34px;
}
.group button:disabled .ic {
  opacity: 0.4;
}
.snap {
  margin-left: auto;
  display: flex;
  gap: 1px;
}
.snap button,
.toggles button {
  width: 36px;
  height: 34px;
}
.toggles {
  display: flex;
  gap: 1px;
  margin-left: 8px;
  padding-left: 6px;
  border-left: 1px solid #2e2e2e;
}
.geometry {
  display: flex;
  align-items: center;
}
.dim {
  width: 26px;
  text-align: right;
  padding-right: 3px;
  color: #8c8c8c;
}
.geometry .dim:first-child {
  width: 23px;
}
.ratio {
  width: 38px;
  height: 34px;
  padding-left: 6px;
}

.spin {
  display: flex;
  width: 84px;
  height: 34px;
  border: 1px solid #1f1f1f;
  border-radius: 5px;
  background: #2d2d2d;
  flex: none;
}
.spin input {
  flex: 1;
  padding-left: 7px;
}
.spin button {
  width: 17px;
}
.spin svg {
  width: 15px;
  height: 15px;
}
.spin.off {
  background: #333;
  color: #8c8c8c;
  width: 126px;
}
.spin.off.wide {
  width: 131px;
}
.spin.off button {
  border-left: 1px solid #2f2f2f;
}
.spin.off svg {
  opacity: 0.3;
}

.combo {
  position: relative;
}
.combo select {
  display: block;
  width: 100%;
  height: 34px;
  appearance: none;
  padding: 2px 11px 0;
  background: linear-gradient(#383838, #303030);
  border: 1px solid #1d1d1d;
  border-bottom-color: #101010;
  border-radius: 5px;
}
.combo svg {
  position: absolute;
  right: 10px;
  top: 9px;
  width: 16px;
  height: 16px;
  pointer-events: none;
}
.unit {
  width: 66px;
  margin-left: 4px;
}

main {
  flex: 1;
  display: flex;
}
.toolbox {
  width: 32px;
  margin-right: 2px;
  border-right: 1px solid #1d1d1d;
}
.defs {
  position: absolute;
  width: 0;
  height: 0;
}
.toolgroup + .toolgroup {
  border-top: 1px solid #2c2c2c;
}
.toolgroup button {
  width: 30px;
  height: 32px;
}
.desk {
  flex: 1;
  min-width: 0;
  display: flex;
  flex-direction: column;
}
.canvas {
  flex: 1;
  background: #d1d1d1;
  padding: 113px 0 50px 137px;
  overflow: hidden;
}
.sheet {
  display: block;
  width: 1054px;
  background: #fff;
  outline: 1px solid #a0a0a0;
  outline-offset: -1px;
  box-shadow: 2px 2px 2px #555;
}
.sheet path {
  fill: none;
  stroke: #000;
  stroke-width: 0.9;
}
.hscroll {
  height: 27px;
  background: #303030;
  padding-top: 9px;
}
.hscroll i {
  display: block;
  margin-left: 30%;
  width: 37%;
  height: 8px;
  border-radius: 4px;
  background: #a4a4a2;
}
.vside {
  width: 18px;
  display: flex;
  flex-direction: column;
  background: #303030;
}
.mini {
  position: relative;
  height: 26px;
  overflow: hidden;
}
.mini b {
  position: absolute;
  inset: 0;
  font: bold 8px/22px "Noto Sans", sans-serif;
  color: #222;
  text-align: center;
}
.vscroll {
  flex: 1;
}
.vscroll i {
  display: block;
  position: relative;
  top: calc(27% + 3px);
  left: 5px;
  width: 8px;
  height: 42%;
  border-radius: 4px;
  background: #a4a4a2;
}
.grip {
  width: 12px;
  display: flex;
  flex-direction: column;
  justify-content: center;
  align-items: center;
  gap: 2px;
}
.grip i {
  width: 3px;
  height: 3px;
  border-radius: 2px;
  background: #eee;
}

.dock {
  width: 617px;
  margin: 5px 6px 6px 0;
  background: #2d2d2d;
  display: flex;
  flex-direction: column;
}
.docktabs {
  height: 37px;
  display: flex;
  background: #262626;
  border-bottom: 1px solid #1b1b1b;
  padding-left: 3px;
}
.tab {
  width: 64px;
  padding-bottom: 2px;
}
.tab.current {
  width: 246px;
  height: 37px;
  margin-left: 6px;
  padding: 2px 14px 0 12px;
  display: flex;
  align-items: center;
  gap: 1px;
  background: #2d2d2d;
  border-bottom: 4px solid #1f5196;
}
.tab.current span {
  flex: 1;
  white-space: nowrap;
}
.tab.current button svg {
  width: 12px;
  height: 12px;
}
.more {
  width: 30px;
  height: 30px;
  margin: 3px 0 0 auto;
  background: #2c2c2c;
  border-radius: 4px;
  opacity: 0.6;
}
.book {
  margin: 1px 0 0 1px;
  border: 1px solid #1b1b1b;
}
.modes {
  height: 27px;
  display: flex;
  padding-left: 7px;
  background: #292929;
  border-bottom: 1px solid #1b1b1b;
}
.modes button {
  height: 29px;
  padding: 4px 7px 0;
  margin-right: 8px;
  border-bottom: 4px solid transparent;
}
.modes .current {
  border-color: #1f5196;
}
.form {
  padding: 3px 8px 29px;
  display: flex;
  flex-direction: column;
}
.head {
  font-weight: 700;
  line-height: 26px;
}
.form > .row {
  margin-top: 5px;
}
.rows {
  display: flex;
  flex-direction: column;
  gap: 4px;
}
.row {
  display: flex;
  align-items: center;
}
.name {
  width: 148px;
}
.row .spin {
  margin-left: 2px;
}
.check {
  display: flex;
  align-items: center;
  gap: 4px;
  padding-left: 4px;
  white-space: nowrap;
}
.line {
  height: 32px;
}
input[type="checkbox"] {
  appearance: none;
  width: 16px;
  height: 16px;
  border: 1px solid #161616;
  border-radius: 3px;
  background: #353535;
  display: grid;
  place-items: center;
}
input[type="checkbox"]:checked {
  background: #1d6fd8;
  border-color: #1a60ba;
}
input[type="checkbox"]:checked::before {
  content: "";
  width: 11px;
  height: 10px;
  background: #fff;
  clip-path: polygon(0 50%, 15% 33%, 38% 58%, 84% 4%, 100% 20%, 40% 95%);
}
input[type="range"] {
  flex: 1;
  height: 24px;
  appearance: none;
  background:
    linear-gradient(#1f5cb0, #1f5cb0) 10px center / calc(var(--fill) * (100% - 20px)) 2px no-repeat,
    linear-gradient(#292929, #292929) 10px center / calc(100% - 20px) 2px no-repeat,
    linear-gradient(#1b1b1b, #1b1b1b) 9px center / calc(100% - 18px) 4px no-repeat;
}
input[type="range"]::-webkit-slider-thumb {
  appearance: none;
  width: 20px;
  height: 20px;
  border-radius: 50%;
  border: 1px solid #0c0c0c;
  background: linear-gradient(#363636, #2d2d2d);
}
.preview {
  padding: 7px 5px 0;
  flex: 1;
}
.live {
  display: flex;
  justify-content: space-between;
  padding: 0 9px 0 10px;
  margin-bottom: 10px;
}
.live .raised {
  width: 120px;
  height: 34px;
}
.apply {
  display: flex;
  gap: 4px;
  padding: 0 0 6px 5px;
}
.apply .raised {
  width: 158px;
  height: 34px;
}
.apply .square {
  width: 36px;
}
.apply div {
  flex: 1;
  display: flex;
  justify-content: center;
  padding-right: 4px;
}

.palette {
  height: 28px;
  display: flex;
  align-items: flex-end;
}
.swatches {
  flex: 1;
  display: flex;
  gap: 1px;
  height: 17px;
  padding: 0 0 1px 1px;
}
.swatches button {
  flex: 1;
}
.swatches .none {
  background: #fff;
}
.arrow {
  width: 32px;
  height: 28px;
}
.burger {
  width: 20px;
  height: 28px;
  margin-right: 1px;
}
.burger svg {
  width: 16px;
  height: 20px;
}

.status {
  height: 43px;
  display: flex;
  align-items: center;
}
.style,
.coords {
  display: grid;
  line-height: 21px;
}
.style {
  grid-template-columns: 62px 83px;
  column-gap: 27px;
}
.style dt {
  text-align: right;
  white-space: nowrap;
}
.spin.opacity {
  width: 73px;
  height: 41px;
}
.layer {
  margin-left: 13px;
  width: 76px;
  padding-left: 6px;
  border-left: 3px solid #3f7fe0;
}
.flag {
  width: 37px;
  height: 34px;
}
.message {
  flex: 1;
  min-width: 0;
  padding: 2px 0 0 7px;
  border-left: 1px solid #2e2e2e;
  white-space: nowrap;
  overflow: hidden;
}
.coords {
  grid-template-columns: 20px 54px;
  margin-right: 9px;
}
.coords dd {
  text-align: right;
}
.spin.big {
  width: 99px;
  height: 41px;
}
.spin.big input {
  padding-left: 12px;
}
.spin.big button {
  width: 22px;
}
.status label {
  width: 17px;
  white-space: nowrap;
}
.status .opl {
  width: 20px;
}
.status .rot {
  margin-left: 10px;
}
.spin.turn {
  width: 108px;
  margin-right: 15px;
}
.spin.turn input {
  padding-left: 16px;
}
</style>
